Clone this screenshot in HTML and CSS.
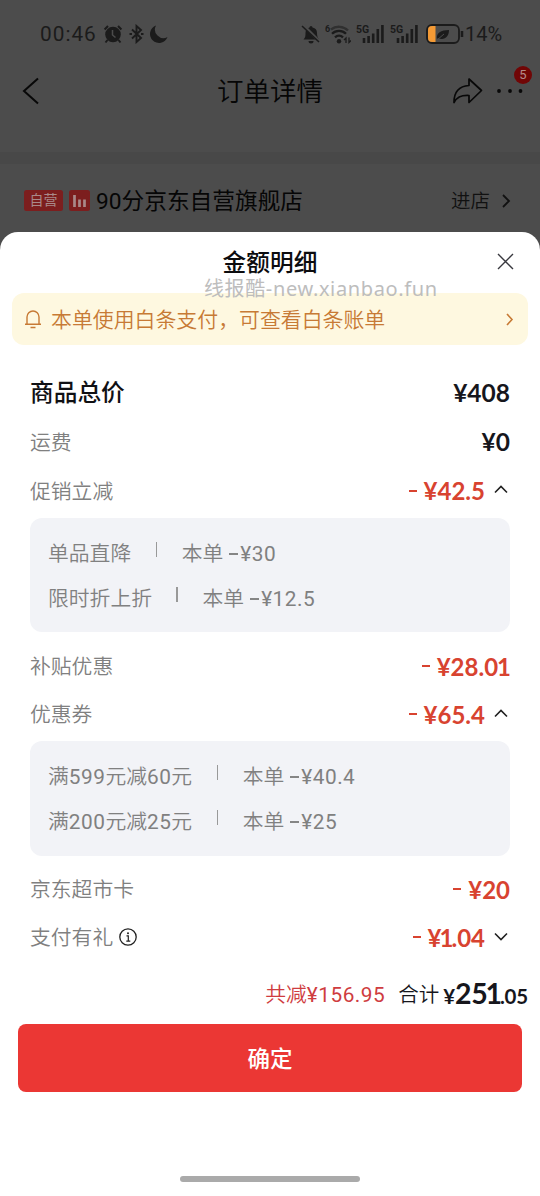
FILE: index.html
```html
<!DOCTYPE html>
<html lang="zh-CN">
<head>
<meta charset="utf-8">
<title>订单详情</title>
<link rel="stylesheet" href="styles.css">
</head>
<body>
<div class="phone">
  <div class="status">
    <span class="clock">00:46</span>
    <svg class="i-alarm" width="20" height="20" viewBox="0 0 20 20"><circle cx="10" cy="10.5" r="7.8" fill="#1b1b1b"/><path d="M1.600 5.500 5 2M18.400 5.500 15 2M4.500 16 2.500 18.500M15.500 16l2 2.500" stroke="#1b1b1b" stroke-width="2"/><path d="M9.500 6v5l3 2.500" fill="none" stroke="#4c4c4c" stroke-width="1.500"/></svg>
    <svg class="i-bt" width="15" height="20" viewBox="0 0 15 20"><path d="m3 5.500 9 8.500-4.500 4V2L12 6l-9 8.500" fill="none" stroke="#1b1b1b" stroke-width="1.900"/><path d="M.5 10h2.500M12 10h2.500" stroke="#1b1b1b" stroke-width="2"/></svg>
    <svg class="i-moon" width="18" height="19" viewBox="0 0 18 19"><path d="M6 .5A9 9 0 1 0 17.500 12 8.500 8.500 0 0 1 6 .5Z" fill="#1b1b1b"/></svg>
    <span class="grow"></span>
    <svg class="i-mute" width="20" height="20" viewBox="0 0 20 20"><path d="M2.500 15.500c2-2 2-4 2-6.500 0-3 1.500-5 4-5.500a1.500 1.500 0 0 1 3 0C14.500 4 16 6 16 9c0 2.500.5 4.500 2 6.500Z" fill="#1b1b1b"/><path d="M7.500 17h5a2.500 2.500 0 0 1-5 0" fill="#1b1b1b"/><path d="m2 1 17 17" stroke="#4c4c4c" stroke-width="3"/><path d="m1 2 17 16" stroke="#1b1b1b" stroke-width="1.500"/></svg>
    <svg class="i-wifi" width="26" height="22" viewBox="0 0 26 22"><path d="M6 6.500a13 13 0 0 1 17 1" fill="none" stroke="#303030" stroke-width="2.400"/><path d="M7 10.800a10 10 0 0 1 14 0M10 14.300a6 6 0 0 1 8 0" fill="none" stroke="#1b1b1b" stroke-width="2.300"/><circle cx="14" cy="18.200" r="2.200" fill="#1b1b1b"/><path d="M21 20v-5l-2 2M24 14.500v5l2-2" fill="none" stroke="#1b1b1b" stroke-width="1.300"/><text x="0" y="9" class="mini">6</text></svg>
    <svg class="i-sig" width="29" height="22" viewBox="0 0 29 22"><text x="0" y="10" class="mini5">5G</text><path d="M8 20v-5M12.600 20v-7M17.200 20v-9.500M21.800 20V6M26.400 20V2" stroke="#1b1b1b" stroke-width="2.600"/></svg>
    <svg class="i-sig" width="29" height="22" viewBox="0 0 29 22"><text x="0" y="10" class="mini5">5G</text><path d="M8 20v-5M12.600 20v-7M17.200 20v-9.500M21.800 20V6M26.400 20V2" stroke="#1b1b1b" stroke-width="2.600"/></svg>
    <svg class="i-bat" width="38" height="20" viewBox="0 0 38 20"><rect x="1" y="1" width="32" height="18" rx="5" fill="none" stroke="#1b1b1b" stroke-width="1.800"/><path d="M9.500 2H6a4 4 0 0 0-4 4v8a4 4 0 0 0 4 4h3.500Z" fill="#f49a35"/><path d="M11 15c-1-6 4-9 12-9 0 7-5 11-11 8Z" fill="#1b1b1b"/><path d="m11 16 7-6" stroke="#4c4c4c"/><path d="M36 7v6" stroke="#1b1b1b" stroke-width="2.500"/></svg>
    <span class="percent">14%</span>
  </div>
  <div class="nav">
    <svg class="back" width="18" height="28" viewBox="0 0 18 28"><path d="M16 1.500 2 14l14 12.500" fill="none" stroke="#080808" stroke-width="2"/></svg>
    <span class="nav-title">订单详情</span>
    <svg class="share" width="32" height="28" viewBox="0 0 32 28"><path d="M17 2 29.500 13.500 17 25.500V18.500C9 18 5 20 2 25.500 2 14 8 9 17 8.500Z" fill="none" stroke="#080808" stroke-width="1.700" stroke-linejoin="round"/></svg>
    <span class="more"><svg width="28" height="6" viewBox="0 0 28 6"><g fill="#080808"><circle cx="3" cy="3" r="1.900"/><circle cx="14" cy="3" r="1.900"/><circle cx="24.500" cy="3" r="1.900"/></g></svg><b class="badge">5</b></span>
  </div>
  <div class="band"></div>
  <div class="store">
    <span class="tag">自营</span>
    <svg class="bars" width="21" height="21" viewBox="0 0 21 21"><rect width="21" height="21" rx="2.500" fill="#7c1e1e"/><path d="M5.500 5v12M10.500 9.500V17M15.500 9.500V17" stroke="#a98989" stroke-width="2.700"/></svg>
    <span class="store-name">90分京东自营旗舰店</span>
    <span class="enter">进店</span>
    <svg width="9" height="14" viewBox="0 0 9 14"><path d="m1 1 6 6-6 6" fill="none" stroke="#111" stroke-width="1.800"/></svg>
  </div>

  <div class="sheet">
    <div class="sheet-head">
      <h1>金额明细</h1>
      <svg class="close" width="17" height="17" viewBox="0 0 17 17"><path d="m1 1 15 15M16 1 1 16" stroke="#38383e" stroke-width="1.400"/></svg>
      <span class="watermark">线报酷-new.xianbao.fun</span>
    </div>
    <div class="notice">
      <svg width="18" height="20" viewBox="0 0 18 20"><path d="M3 15V8a6 6 0 0 1 12 0v7M1 15.300h16M6.500 18.500h5" fill="none" stroke="#c77a35" stroke-width="1.400"/></svg>
      <span class="notice-text">本单使用白条支付，可查看白条账单</span>
      <svg width="8" height="13" viewBox="0 0 8 13"><path d="m1 1 5 5.500L1 12" fill="none" stroke="#c77a35" stroke-width="1.600"/></svg>
    </div>
    <div class="list">
      <div class="row first"><span class="strong">商品总价</span><span class="amount plain">¥408</span></div>
      <div class="row"><span class="label">运费</span><span class="amount plain">¥0</span></div>
      <div class="row"><span class="label">促销立减</span><span class="amount off"><i class="minus"></i>¥42.5</span><svg class="arrow" width="14" height="9" viewBox="0 0 14 9"><path d="m1 7.500 6-6 6 6" fill="none" stroke="#202020" stroke-width="1.600"/></svg></div>
      <div class="box">
        <div class="line"><span>单品直降</span><i class="bar"></i><span>本单 <i class="dash"></i><i class="num">¥30</i></span></div>
        <div class="line"><span>限时折上折</span><i class="bar"></i><span>本单 <i class="dash"></i><i class="num">¥12.5</i></span></div>
      </div>
      <div class="row"><span class="label">补贴优惠</span><span class="amount off"><i class="minus"></i>¥28.0<i class="one">1</i></span></div>
      <div class="row"><span class="label">优惠券</span><span class="amount off"><i class="minus"></i>¥65.4</span><svg class="arrow" width="14" height="9" viewBox="0 0 14 9"><path d="m1 7.500 6-6 6 6" fill="none" stroke="#202020" stroke-width="1.600"/></svg></div>
      <div class="box">
        <div class="line"><span>满<i class="num">599</i>元减<i class="num">60</i>元</span><i class="bar"></i><span>本单 <i class="dash"></i><i class="num">¥40.4</i></span></div>
        <div class="line"><span>满<i class="num">200</i>元减<i class="num">25</i>元</span><i class="bar"></i><span>本单 <i class="dash"></i><i class="num">¥25</i></span></div>
      </div>
      <div class="row"><span class="label">京东超市卡</span><span class="amount off"><i class="minus"></i>¥20</span></div>
      <div class="row"><span class="label">支付有礼</span><svg class="info" width="18" height="18" viewBox="0 0 18 18"><circle cx="9" cy="9" r="8.200" fill="none" stroke="#222" stroke-width="1.300"/><path d="M7.500 7.800H9.300V13M7.300 13.100h4" fill="none" stroke="#222" stroke-width="1.200"/><circle cx="9" cy="5.200" r="1" fill="#222"/></svg><span class="amount off"><i class="minus"></i>¥<i class="one lead">1</i>.04</span><svg class="arrow" width="14" height="9" viewBox="0 0 14 9"><path d="m1 1.500 6 6 6-6" fill="none" stroke="#202020" stroke-width="1.600"/></svg></div>
    </div>
    <div class="total"><span class="saved">共减<i class="num">¥156.95</i></span><span class="sum">合计</span><span class="sum-amount"><small class="yen">¥</small>25<i class="one lead">1</i><small>.05</small></span></div>
    <button class="confirm">确定</button>
    <div class="home"></div>
  </div>
</div>
</body>
</html>
```

FILE: styles.css
```css
* { box-sizing: border-box; }
body { margin: 0; background: #4c4c4c; font-family: Roboto, "Noto Sans CJK SC", sans-serif; }
svg { display: block; flex: none; }
i { font-style: normal; }
.phone { width: 540px; height: 1196px; overflow: hidden; display: flex; flex-direction: column; white-space: nowrap; }
.status { height: 68px; padding: 0 38px 0 40px; display: flex; align-items: center; color: #1b1b1b; flex: none; }
.clock { font-size: 20.800px; letter-spacing: 1px; width: 63px; }
.i-bt { margin-left: 6px; }
.i-moon { margin-left: 6px; }
.grow { flex: 1; }
.i-wifi { margin-left: 4px; }
.i-sig { margin-left: 5px; }
.i-bat { margin-left: 7px; }
.percent { font-size: 20px; width: 37px; margin-left: 1px; }
.mini { font: bold 9px Roboto, sans-serif; fill: #1b1b1b; }
.mini5 { font: bold 10.500px Roboto, sans-serif; fill: #1b1b1b; }
.nav { height: 46px; display: flex; align-items: center; padding: 0 16px 0 22px; color: #060606; flex: none; }
.nav-title { font-size: 26.500px; line-height: 46px; flex: 1; padding: 1px 0 0 177px; font-weight: 350; }
.share { margin-right: 12px; }
.more { position: relative; width: 28px; }
.badge { position: absolute; right: -8px; top: -22px; width: 18px; height: 18px; border-radius: 9px; background: #710606; color: #b48a8a; font-size: 13px; font-weight: 400; line-height: 18px; text-align: center; }
.band { height: 12px; margin-top: 38px; background: #484848; flex: none; }
.store { height: 68px; padding: 5px 29px 0 24px; display: flex; align-items: center; flex: none; color: #060606; }
.tag { width: 39px; height: 21px; border-radius: 2.500px; background: #7c1e1e; color: #a98989; font-size: 14px; line-height: 20px; text-align: center; }
.bars { margin-left: 6px; }
.store-name { font-size: 22.700px; margin-left: 6px; flex: 1; padding-bottom: 3px; }
.enter { font-size: 19.500px; margin-right: 12px; color: #111; font-weight: 350; padding-bottom: 2px; }
.sheet { flex: 1; background: #fff; border-radius: 18px 18px 0 0; display: flex; flex-direction: column; }
.sheet-head { height: 61px; position: relative; flex: none; display: flex; justify-content: center; }
h1 { margin: 0; font-size: 23.700px; line-height: 62px; font-weight: 500; color: #0c0c0f; }
.close { position: absolute; right: 26px; top: 21px; }
.watermark { position: absolute; left: 204px; top: 45px; font: 20px/24px "Noto Sans", "Noto Sans CJK SC", sans-serif; letter-spacing: 0.620px; color: #bdbdbd; z-index: 1; }
.notice { margin: 0 12px; height: 52px; border-radius: 12px; background: #fef8e0; padding: 0 14px 0 12px; display: flex; align-items: center; flex: none; color: #c77a35; }
.notice-text { flex: 1; margin-left: 9px; font-size: 20.900px; font-weight: 350; padding-bottom: 2px; }
.list { padding: 23px 30px 0; color: #808080; font-size: 20.800px; font-weight: 350; }
.row { height: 48px; display: flex; align-items: center; }
.row:nth-child(-n+3) { height: 49px; }
.label { padding-bottom: 2px; }
.strong { font-size: 23.700px; color: #101014; font-weight: 500; padding-bottom: 4px; }
.amount { margin-left: auto; font: bold 24px Lato, sans-serif; color: #16161c; display: flex; align-items: center; }
.plain { font-size: 24.500px; padding-bottom: 1px; }
.off { color: #d84330; }
.one { margin-left: -1px; margin-right: -1px; }
.lead { margin-left: -2px; margin-right: -2px; }
.minus { width: 8px; height: 2px; background: currentColor; margin-right: 7px; }
.arrow { margin: 0 2px 2px 9px; }
.info { margin-left: 6px; }
.box { height: 114px; margin: 3px 0 10px; padding: 11px 18px 0; border-radius: 12px; background: #f2f3f7; }
.row + .box ~ .box { height: 115px; margin-bottom: 9px; }
.line { height: 45px; display: flex; align-items: center; }
.num { font-weight: 400; letter-spacing: 0.500px; }
.bar { width: 1.500px; height: 15px; background: #999; margin: 0 24.500px 5px; }
.dash { display: inline-block; width: 9px; height: 1.500px; background: #858585; margin: 0 2px 0 1px; vertical-align: 6px; }
.total { height: 50px; margin: 7px 12px 6px; display: flex; align-items: center; justify-content: flex-end; }
.saved { color: #cf3c40; font-size: 20.800px; font-weight: 350; }
.sum { margin-left: 13px; color: #16161c; font-size: 20.500px; font-weight: 350; }
.sum-amount { font: bold 28.500px Lato, sans-serif; letter-spacing: -0.200px; margin-left: 4px; color: #16161c; }
.sum-amount small { font-size: 20.500px; }
.confirm { margin: 0 18px; height: 68px; border: 0; border-radius: 8px; background: #eb3734; color: #fff; font: 500 22.500px "Noto Sans CJK SC", sans-serif; flex: none; padding: 0 0 2px; }
.home { width: 180px; height: 6px; border-radius: 3px; background: #aaa; margin: 84px auto 0; flex: none; }
```
